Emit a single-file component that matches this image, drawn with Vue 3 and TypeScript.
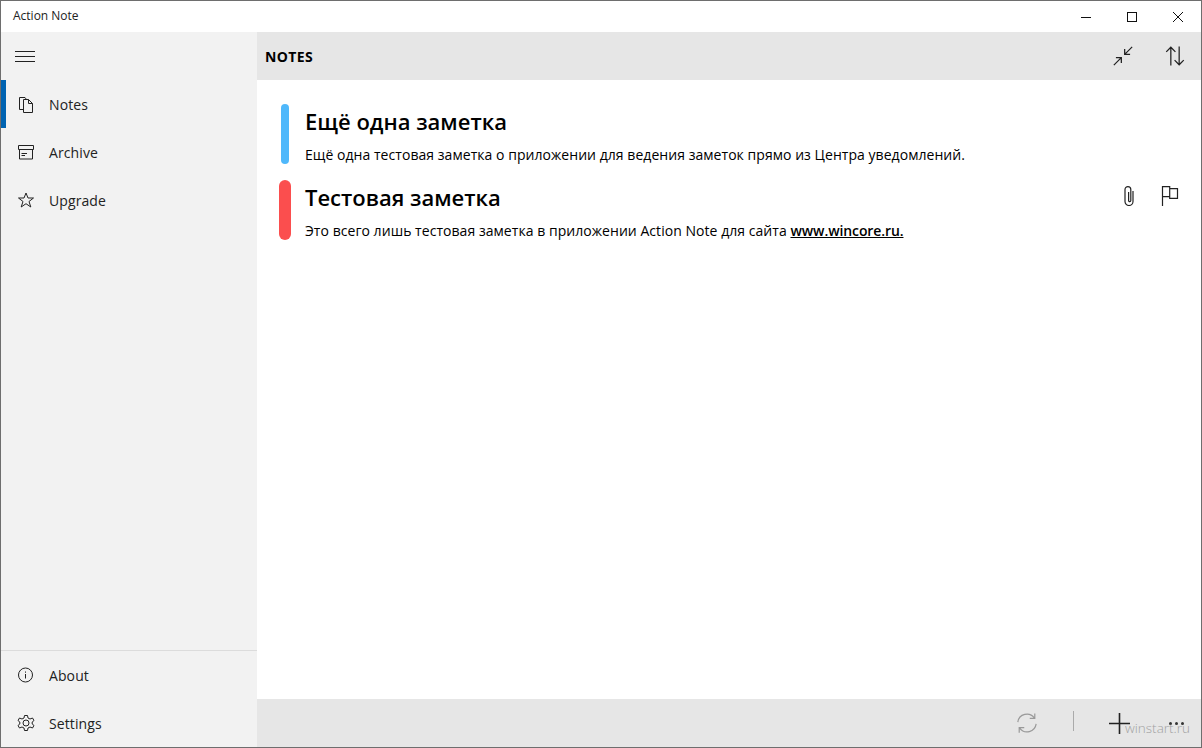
<template>
  <div class="window">
    <div class="titlebar">
      <div class="app-title">Action Note</div>
      <div class="caption">
        <button class="cap-btn">
          <svg width="12" height="12" viewBox="0 0 12 12"><path d="M1 6.500h10" stroke="#111" fill="none" /></svg>
        </button>
        <button class="cap-btn">
          <svg width="12" height="12" viewBox="0 0 12 12"><rect x="1.500" y="1.500" width="9" height="9" stroke="#111" fill="none" /></svg>
        </button>
        <button class="cap-btn">
          <svg width="12" height="12" viewBox="0 0 12 12"><path d="M1 1l10 10M11 1L1 11" stroke="#111" fill="none" /></svg>
        </button>
      </div>
    </div>

    <div class="body">
      <aside class="sidebar">
        <div class="hamburger">
          <svg width="20" height="12" viewBox="0 0 20 12"><path d="M0 1.500h20M0 6.500h20M0 11.500h20" stroke="#222" fill="none" /></svg>
        </div>
        <nav class="nav">
          <a v-for="item in topNav" :key="item.label" class="nav-item" :class="{ active: item.active }">
            <svg class="nav-icon" width="20" height="20" viewBox="0 0 20 20" fill="none" stroke="#222">
              <path v-for="d in item.paths" :key="d" :d="d" />
            </svg>
            <span>{{ item.label }}</span>
          </a>
        </nav>
        <div class="nav bottom">
          <a v-for="item in bottomNav" :key="item.label" class="nav-item">
            <svg class="nav-icon" width="20" height="20" viewBox="0 0 20 20" fill="none" stroke="#222">
              <path v-for="d in item.paths" :key="d" :d="d" />
            </svg>
            <span>{{ item.label }}</span>
          </a>
        </div>
      </aside>

      <main class="content">
        <header class="header">
          <h1>NOTES</h1>
          <div class="header-actions">
            <svg width="20" height="20" viewBox="0 0 24 24" fill="none" stroke="#222" stroke-width="1.500">
              <path d="M1 23l9-9M3.500 14H10v6.500M23 1l-9 9M14 3.500V10h6.500" />
            </svg>
            <svg width="20" height="20" viewBox="0 0 24 24" fill="none" stroke="#222" stroke-width="1.500">
              <path d="M7 23.500V1.500M1.500 7l5.500-5.500L12.500 7M17 .5V22.500M11.500 17l5.500 5.500 5.500-5.500" />
            </svg>
          </div>
        </header>

        <section class="notes">
          <article v-for="note in notes" :key="note.title" class="note">
            <div class="note-bar" :class="{ wide: note.attached }" :style="{ background: note.color }"></div>
            <div class="note-text">
              <h2>{{ note.title }}</h2>
              <p>{{ note.text }} <a v-if="note.link" class="link">{{ note.link }}</a></p>
            </div>
            <div v-if="note.attached" class="note-icons">
              <svg width="14" height="20" viewBox="0 0 14 20" fill="none" stroke="#222" stroke-width="1.200">
                <path d="M11 5v10.500a4 4 0 0 1-8 0V3.500a2.900 2.900 0 0 1 5.800 0v11a1.100 1.100 0 0 1-2.200 0V6" />
              </svg>
              <svg width="18" height="20" viewBox="0 0 18 20" fill="none" stroke="#222" stroke-width="1.200">
                <path d="M1.500 20V.6h7.200v10H1.500M8.700 2.600h7.800v9.800H8.700v-1.800" />
              </svg>
            </div>
          </article>
        </section>

        <footer class="footer">
          <svg class="sync" width="22" height="22" viewBox="0 0 24 24" fill="none" stroke="#999" stroke-width="1.300">
            <path d="M2 11A10 10 0 0 1 20 6.500M22 13A10 10 0 0 1 4 17.500M20.500 1.500V7h-5.500M3.500 22.500V17H9" />
          </svg>
          <div class="divider"></div>
          <svg class="add" width="21" height="21" viewBox="0 0 21 21" fill="none" stroke="#222" stroke-width="1.600">
            <path d="M0 10.500h21M10.500 0v21" />
          </svg>
          <span class="more"><i></i><i></i><i></i></span>
          <span class="watermark">winstart.ru</span>
        </footer>
      </main>
    </div>
  </div>
</template>

<script setup lang="ts">
interface NavItem {
  label: string
  paths: string[]
  active?: boolean
}

interface Note {
  title: string
  text: string
  color: string
  link?: string
  attached?: boolean
}

const topNav: NavItem[] = [
  {
    label: 'Notes',
    active: true,
    paths: ['M6.500 15.500H2.500V3.500H8L9.500 5.500', 'M6.500 5.500H11.500L15.500 9.500V18.500H6.500Z', 'M11.500 5.500V9.500H15.500']
  },
  {
    label: 'Archive',
    paths: ['M1.500 3.500H16.500V7.500H1.500Z', 'M2.500 7.500V17H15.500V7.500', 'M4.500 11.500H10M4.500 13.500H8']
  },
  {
    label: 'Upgrade',
    paths: ['M9 3L11 8H16.500L12 11.500L13.800 17L9 13.700L4.200 17L6 11.500L1.500 8H7Z']
  }
]

const bottomNav: NavItem[] = [
  {
    label: 'About',
    paths: ['M8.500 3a7 7 0 1 0 0 14a7 7 0 1 0 0-14Z', 'M8.500 9v4.500M8.500 6.500v1.200']
  },
  {
    label: 'Settings',
    paths: [
      'M7.500 2.500H10.500L11 5L13 6L15.500 5L17 7.500L15.200 9V11L17 12.500L15.500 15L13 14L11 15L10.500 17.500H7.500L7 15L5 14L2.500 15L1 12.500L2.800 11V9L1 7.500L2.500 5L5 6L7 5Z',
      'M9 7a3 3 0 1 0 0 6a3 3 0 1 0 0-6Z'
    ]
  }
]

const notes: Note[] = [
  {
    title: 'Ещё одна заметка',
    text: 'Ещё одна тестовая заметка о приложении для ведения заметок прямо из Центра уведомлений.',
    color: '#4fb8fb'
  },
  {
    title: 'Тестовая заметка',
    text: 'Это всего лишь тестовая заметка в приложении Action Note для сайта',
    link: 'www.wincore.ru.',
    color: '#fb4e4e',
    attached: true
  }
]
</script>

<style>
html,
body {
  margin: 0;
  background: #fff;
}
</style>

<style scoped>
.window {
  box-sizing: border-box;
  width: 1202px;
  height: 748px;
  border: 1px solid #6e6e6e;
  display: flex;
  flex-direction: column;
  overflow: hidden;
  background: #fff;
  color: #111;
  font-family: "Open Sans", "Noto Sans", sans-serif;
}

.titlebar {
  height: 31px;
  flex: none;
  display: flex;
  align-items: center;
  justify-content: space-between;
}

.app-title {
  padding-left: 12px;
  padding-bottom: 2px;
  font-size: 12px;
  color: #222;
}

.caption {
  display: flex;
}

.cap-btn {
  width: 46px;
  height: 31px;
  padding: 0;
  border: none;
  background: none;
  display: flex;
  align-items: center;
  justify-content: center;
}

.body {
  flex: 1;
  min-height: 0;
  display: flex;
}

.sidebar {
  width: 256px;
  flex: none;
  background: #f2f2f2;
  display: flex;
  flex-direction: column;
}

.hamburger {
  height: 48px;
  flex: none;
  display: flex;
  align-items: center;
  padding-left: 14px;
  box-sizing: border-box;
}

.nav-item {
  height: 48px;
  display: flex;
  align-items: center;
  gap: 12px;
  padding-left: 16px;
  font-size: 14px;
  letter-spacing: 0.1px;
  color: #222;
  box-sizing: border-box;
}

.nav-item.active {
  border-left: 5px solid #0063b1;
  padding-left: 11px;
}

.nav-icon {
  flex: none;
}

.bottom {
  margin-top: auto;
  border-top: 1px solid #dcdcdc;
}

.content {
  flex: 1;
  min-width: 0;
  display: flex;
  flex-direction: column;
}

.header {
  height: 48px;
  flex: none;
  background: #e6e6e6;
  display: flex;
  align-items: center;
  justify-content: space-between;
  padding: 0 16px 0 8px;
}

.header h1 {
  margin: 0;
  font-size: 14px;
  font-weight: 700;
  letter-spacing: 0.4px;
  color: #000;
}

.header-actions {
  display: flex;
  align-items: center;
  gap: 32px;
}

.notes {
  flex: 1;
  padding: 24px 22px 0 22px;
  display: flex;
  flex-direction: column;
  gap: 16px;
}

.note {
  height: 60px;
  display: flex;
  align-items: stretch;
}

.note-bar {
  width: 8px;
  margin: 0 16px 0 2px;
  border-radius: 4px;
  flex: none;
}

.note-bar.wide {
  width: 12px;
  margin: 0 14px 0 0;
  border-radius: 6px;
}

.note-text {
  flex: 1;
  min-width: 0;
}

.note-text h2 {
  margin: 0 0 5px;
  font-size: 22px;
  line-height: 34px;
  font-weight: 600;
  color: #000;
}

.note-text p {
  margin: 0;
  font-size: 14px;
  line-height: 24px;
  letter-spacing: 0.045px;
  color: #000;
}

.link {
  font-weight: 600;
  letter-spacing: -0.1px;
  text-decoration: underline;
}

.note-icons {
  display: flex;
  align-items: flex-start;
  gap: 25px;
  padding-top: 6px;
}

.footer {
  position: relative;
  height: 48px;
  flex: none;
  background: #e6e6e6;
  display: flex;
  align-items: center;
  justify-content: flex-end;
  padding-right: 17px;
}

.divider {
  width: 1px;
  height: 20px;
  background: #aaa;
  margin: -4px 35px 0 35px;
}

.more {
  display: flex;
  gap: 3px;
  margin-left: 39px;
  margin-top: 1px;
}

.more i {
  width: 3px;
  height: 3px;
  background: #333;
  border-radius: 50%;
}

.watermark {
  position: absolute;
  right: 11px;
  top: 20px;
  font-size: 13.500px;
  font-weight: 300;
  color: #9a9a9a;
  opacity: 0.9;
}
</style>
